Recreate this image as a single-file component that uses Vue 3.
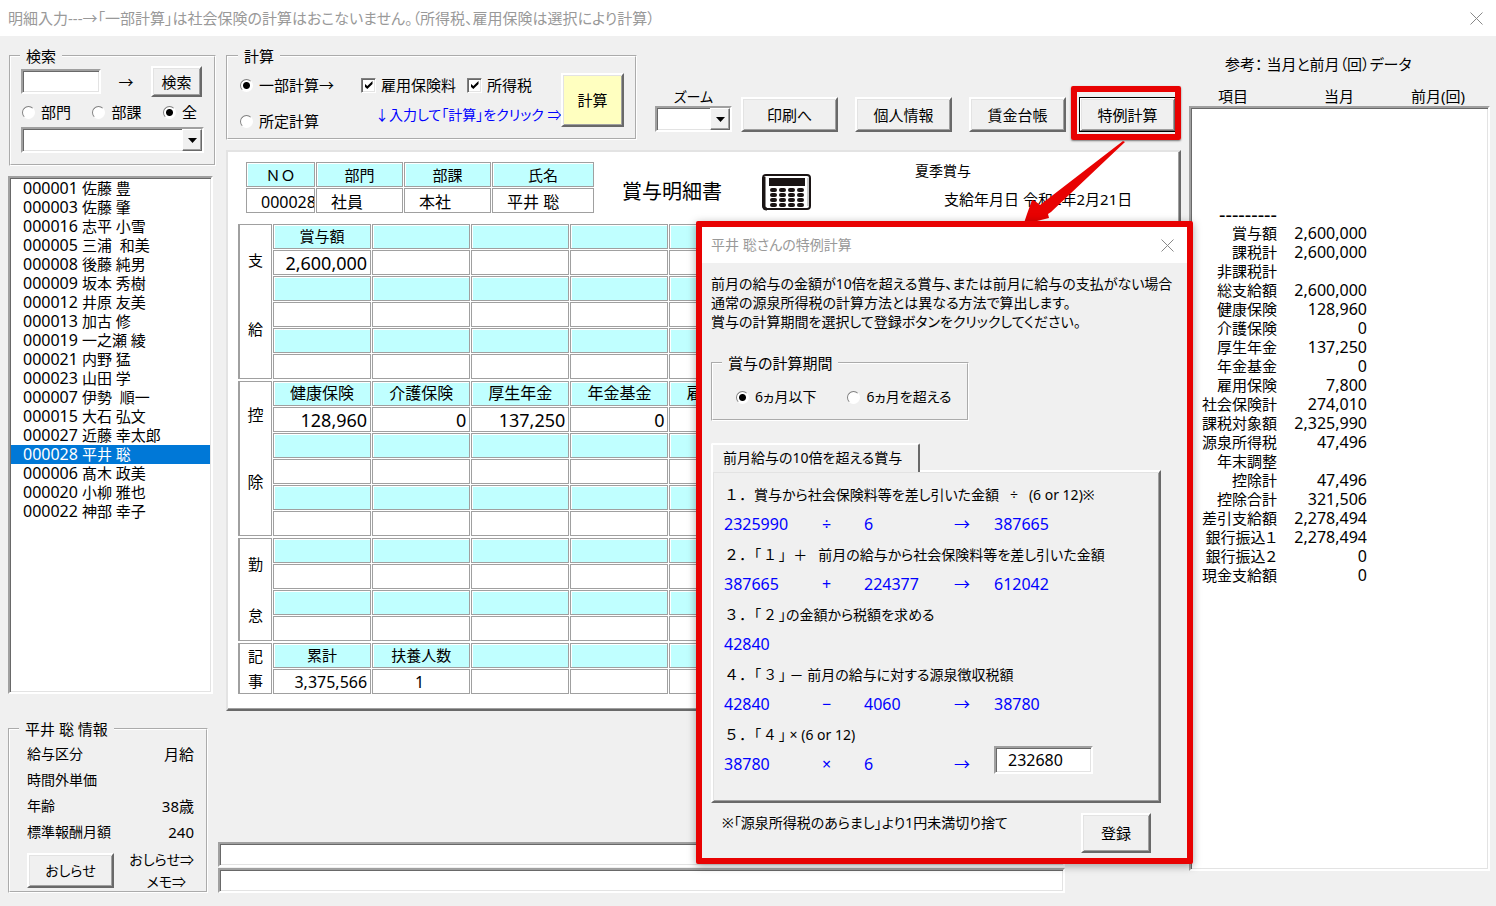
<script setup>
import { ref } from 'vue'

const employees = [
  ['000001', '佐藤 豊'],
  ['000003', '佐藤 肇'],
  ['000016', '志平 小雪'],
  ['000005', '三浦  和美'],
  ['000008', '後藤 純男'],
  ['000009', '坂本 秀樹'],
  ['000012', '井原 友美'],
  ['000013', '加古 修'],
  ['000019', '一之瀬 綾'],
  ['000021', '内野 猛'],
  ['000023', '山田 学'],
  ['000007', '伊勢  順一'],
  ['000015', '大石 弘文'],
  ['000027', '近藤 幸太郎'],
  ['000028', '平井 聡'],
  ['000006', '髙木 政美'],
  ['000020', '小柳 雅也'],
  ['000022', '神部 幸子'],
]
const selected = ref('000028')

const scope = ref('all')
const calcMode = ref('partial')
const employmentIns = ref(true)
const incomeTax = ref(true)
const period = ref('le6')
const taxResult = ref('232680')

const COLS = 9
const pad = (list) => Array.from({ length: COLS }, (_, i) => list[i] ?? '')
const row = (kind, list = []) => ({ kind, cells: pad(list) })

const sections = [
  {
    id: 'pay',
    label: ['支', '給'],
    rows: [
      row('head', ['賞与額']), row('value', ['2,600,000']),
      row('head'), row('value'),
      row('head'), row('value'),
    ],
  },
  {
    id: 'deduct',
    label: ['控', '除'],
    rows: [
      row('head', ['健康保険', '介護保険', '厚生年金', '年金基金', '雇用保険']),
      row('value', ['128,960', '0', '137,250', '0', '7,800']),
      row('head'), row('value'),
      row('head'), row('value'),
    ],
  },
  {
    id: 'attend',
    label: ['勤', '怠'],
    rows: [row('head'), row('value'), row('head'), row('value')],
  },
  {
    id: 'notes',
    label: ['記', '事'],
    rows: [row('head', ['累計', '扶養人数']), row('value', ['3,375,566', '1'])],
  },
]

const reference = [
  ['', ''], ['', ''], ['', ''], ['', ''], ['', ''],
  ['---------', ''],
  ['賞与額', '2,600,000'],
  ['課税計', '2,600,000'],
  ['非課税計', ''],
  ['総支給額', '2,600,000'],
  ['健康保険', '128,960'],
  ['介護保険', '0'],
  ['厚生年金', '137,250'],
  ['年金基金', '0'],
  ['雇用保険', '7,800'],
  ['社会保険計', '274,010'],
  ['課税対象額', '2,325,990'],
  ['源泉所得税', '47,496'],
  ['年末調整', ''],
  ['控除計', '47,496'],
  ['控除合計', '321,506'],
  ['差引支給額', '2,278,494'],
  ['銀行振込１', '2,278,494'],
  ['銀行振込２', '0'],
  ['現金支給額', '0'],
]

const steps = [
  { no: '１．', title: '賞与から社会保険料等を差し引いた金額   ÷   (6 or 12)※', calc: ['2325990', '÷', '6', '→', '387665'] },
  { no: '２．', title: '「 １ 」  ＋   前月の給与から社会保険料等を差し引いた金額', calc: ['387665', '+', '224377', '→', '612042'] },
  { no: '３．', title: '「 ２ 」の金額から税額を求める', calc: ['42840', '', '', '', ''] },
  { no: '４．', title: '「 ３ 」 － 前月の給与に対する源泉徴収税額', calc: ['42840', '−', '4060', '→', '38780'] },
  { no: '５．', title: '「 ４ 」 × (6 or 12)', calc: ['38780', '×', '6', '→', null] },
]
</script>

<template>
  <div class="window">
    <header class="titlebar">
      <h1>明細入力---→「一部計算」は社会保険の計算はおこないません。（所得税、雇用保険は選択により計算）</h1>
      <button class="close" type="button" aria-label="閉じる">
        <svg width="13" height="13" viewBox="0 0 13 13"><path d="M.5.5l12 12M12.5.5l-12 12" stroke="#888" fill="none" /></svg>
      </button>
    </header>

    <main class="body">
      <aside class="left">
        <fieldset class="group search">
          <legend>検索</legend>
          <div class="search-row">
            <input class="sunken search-text" type="text" aria-label="検索文字">
            <span class="to">→</span>
            <button class="raised search-btn" type="button">検索</button>
          </div>
          <div class="scope-row">
            <label><input v-model="scope" type="radio" name="scope" value="dept">部門</label>
            <label><input v-model="scope" type="radio" name="scope" value="section">部課</label>
            <label><input v-model="scope" type="radio" name="scope" value="all">全</label>
          </div>
          <div class="combo">
            <select class="sunken" aria-label="部門・部課"><option></option></select>
            <span class="drop"><svg width="9" height="5" viewBox="0 0 9 5"><path d="M0 0h9L4.500 5z" /></svg></span>
          </div>
        </fieldset>

        <ul class="sunken people" role="listbox" aria-label="社員一覧">
          <li
            v-for="[code, name] in employees" :key="code" role="option"
            :aria-selected="code === selected" :class="{ on: code === selected }" @click="selected = code"
          ><span class="num">{{ code }}</span><span>{{ name }}</span></li>
        </ul>

        <fieldset class="group info">
          <legend>平井 聡 情報</legend>
          <dl>
            <div><dt>給与区分</dt><dd>月給</dd></div>
            <div><dt>時間外単価</dt><dd></dd></div>
            <div><dt>年齢</dt><dd>38歳</dd></div>
            <div><dt>標準報酬月額</dt><dd>240</dd></div>
          </dl>
          <div class="notice">
            <button class="raised" type="button">おしらせ</button>
            <div class="notice-labels">
              <label for="notice">おしらせ⇒</label>
              <label for="memo" class="memo">メモ⇒</label>
            </div>
          </div>
        </fieldset>
      </aside>

      <section class="center">
        <div class="toolbar">
          <fieldset class="group calc">
            <legend>計算</legend>
            <div class="calc-body">
              <div class="modes">
                <label><input v-model="calcMode" type="radio" name="mode" value="partial">一部計算→</label>
                <label><input v-model="calcMode" type="radio" name="mode" value="full">所定計算</label>
              </div>
              <div class="options">
                <div class="checks">
                  <label><input v-model="employmentIns" type="checkbox">雇用保険料</label>
                  <label><input v-model="incomeTax" type="checkbox">所得税</label>
                </div>
                <p>↓入力して「計算」をクリック ⇒</p>
              </div>
              <button class="raised run" type="button">計算</button>
            </div>
          </fieldset>
          <div class="zoom">
            <label for="zoom">ズーム</label>
            <div class="combo">
              <select id="zoom" class="sunken"><option></option></select>
              <span class="drop"><svg width="9" height="5" viewBox="0 0 9 5"><path d="M0 0h9L4.500 5z" /></svg></span>
            </div>
          </div>
          <nav class="actions">
            <button class="raised" type="button">印刷へ</button>
            <button class="raised" type="button">個人情報</button>
            <button class="raised" type="button">賃金台帳</button>
            <span class="marked"><button class="raised default" type="button">特例計算</button></span>
          </nav>
        </div>

        <article class="sheet">
          <div class="sheet-head">
            <table class="ident">
              <thead><tr><th class="c-no">ＮＯ</th><th class="c-dept">部門</th><th class="c-dept">部課</th><th class="c-name">氏名</th></tr></thead>
              <tbody><tr><td><div>000028</div></td><td><div>社員</div></td><td><div>本社</div></td><td><div>平井 聡</div></td></tr></tbody>
            </table>
            <h2>賞与明細書</h2>
            <svg class="calculator" width="50" height="38" viewBox="0 0 50 38">
              <rect x="1" y="2" width="47" height="34" rx="3" fill="#fff" stroke="#1a1414" stroke-width="2" />
              <path d="M2 4v29q0 3 3 3" fill="none" stroke="#1a1414" stroke-width="3" />
              <path d="M46 5v28" stroke="#999" />
              <rect x="7" y="5" width="36" height="8" fill="#1a1414" />
              <g fill="#1a1414">
                <template v-for="r in 4" :key="r">
                  <rect v-for="c in 4" :key="c" :x="c * 9 - 1" :y="10 + r * 5" width="7" height="4" rx="2" />
                </template>
              </g>
            </svg>
            <div class="sheet-meta">
              <p>夏季賞与</p>
              <p class="paid">支給年月日 令和2年2月21日</p>
            </div>
          </div>

          <div class="slip">
            <table v-for="s in sections" :key="s.id" :class="s.id">
              <tbody>
                <tr v-for="(r, i) in s.rows" :key="i" :class="r.kind">
                  <th v-if="i === 0" class="side" :rowspan="s.rows.length">
                    <div><span v-for="ch in s.label" :key="ch">{{ ch }}</span></div>
                  </th>
                  <td v-for="(c, j) in r.cells" :key="j"><div>{{ c }}</div></td>
                </tr>
              </tbody>
            </table>
          </div>
        </article>

        <div class="messages">
          <input id="notice" class="sunken" type="text">
          <input id="memo" class="sunken" type="text">
        </div>

        <svg class="arrow" width="106" height="88" viewBox="0 0 106 88">
          <path d="M102 1l2 1L30 72l-3 2 1 4-12 3L2 86l4-12 5-14 3 1 5 4z" fill="#e80202" />
        </svg>

        <section class="dialog" role="dialog" aria-labelledby="dlg-title">
          <header class="titlebar">
            <h2 id="dlg-title">平井 聡さんの特例計算</h2>
            <button class="close" type="button" aria-label="閉じる">
              <svg width="13" height="13" viewBox="0 0 13 13"><path d="M.5.5l12 12M12.5.5l-12 12" stroke="#888" fill="none" /></svg>
            </button>
          </header>
          <div class="dialog-body">
            <p class="lead">前月の給与の金額が10倍を超える賞与、または前月に給与の支払がない場合<br>通常の源泉所得税の計算方法とは異なる方法で算出します。<br>賞与の計算期間を選択して登録ボタンをクリックしてください。</p>
            <fieldset class="group period">
              <legend>賞与の計算期間</legend>
              <label><input v-model="period" type="radio" name="period" value="le6">6ヵ月以下</label>
              <label><input v-model="period" type="radio" name="period" value="gt6">6ヵ月を超える</label>
            </fieldset>
            <div class="tab">前月給与の10倍を超える賞与</div>
            <div class="panel">
              <template v-for="s in steps" :key="s.no">
                <h3><span class="full">{{ s.no }}</span>{{ s.title }}</h3>
                <div class="formula">
                  <template v-for="(v, i) in s.calc" :key="i">
                    <input v-if="v === null" v-model="taxResult" class="sunken" type="text" aria-label="税額">
                    <span v-else>{{ v }}</span>
                  </template>
                </div>
              </template>
            </div>
            <footer>
              <p>※「源泉所得税のあらまし」より1円未満切り捨て</p>
              <button class="raised" type="button">登録</button>
            </footer>
          </div>
        </section>
      </section>

      <aside class="right">
        <h2>参考： 当月と前月（回）データ</h2>
        <div class="heads"><span>項目</span><span>当月</span><span>前月(回)</span></div>
        <div class="sunken refbox">
          <table>
            <tbody>
              <tr v-for="(r, i) in reference" :key="i">
                <td class="item" :class="{ dash: r[0].startsWith('-') }">{{ r[0] }}</td>
                <td class="amount">{{ r[1] }}</td>
                <td></td>
              </tr>
            </tbody>
          </table>
        </div>
      </aside>
    </main>
  </div>
</template>

<style>
html, body { background: #f0f0f0; }
</style>

<style scoped>
.window, .window * { box-sizing: border-box; }
.window {
  min-height: 100vh;
  display: flex;
  flex-direction: column;
  background: #f0f0f0;
  color: #000;
  font: 15px/20px "Noto Sans", "Noto Sans CJK JP", sans-serif;
  font-feature-settings: "palt";
  white-space: nowrap;
}
h1, h2, h3, p, dl, dd, ul { margin: 0; padding: 0; font-size: 15px; font-weight: 400; }
button, input, select { font: inherit; font-feature-settings: inherit; color: inherit; border-radius: 0; margin: 0; padding: 0; }

.titlebar {
  height: 36px;
  display: flex;
  align-items: center;
  justify-content: space-between;
  padding: 0 13px 0 8px;
  background: #fff;
  color: #999;
}
.close { display: flex; border: 0; background: none; }

.raised {
  background: #f0f0f0;
  border: 2px solid;
  border-color: #fff #696969 #696969 #fff;
  box-shadow: inset 1px 1px #e3e3e3, inset -1px -1px #a0a0a0;
}
.sunken {
  background: #fff;
  border: 2px solid;
  border-color: #a0a0a0 #fff #fff #a0a0a0;
  box-shadow: inset 1px 1px #696969, inset -1px -1px #e3e3e3;
  outline: 0;
}
.group { margin: 0; padding: 0; min-width: 0; border: 2px groove #fff; }
.group legend { padding: 0 6px; }
label { display: flex; align-items: center; }

input[type="radio"], input[type="checkbox"] { appearance: none; flex: none; background: #fff; }
input[type="radio"] {
  width: 13px;
  height: 13px;
  margin-right: 6px;
  border: 1px solid;
  border-color: #808080 #fff #fff #808080;
  border-radius: 50%;
}
input[type="radio"]:checked { background: radial-gradient(circle, #000 3px, #fff 4px); }
input[type="checkbox"] {
  display: flex;
  align-items: center;
  justify-content: center;
  width: 15px;
  height: 15px;
  margin-right: 5px;
  border: 1px solid;
  border-color: #808080 #fff #fff #808080;
  box-shadow: inset 1px 1px #696969, inset -1px -1px #e3e3e3;
}
input[type="checkbox"]:checked::before {
  content: "";
  width: 8px;
  height: 8px;
  background: #000;
  clip-path: polygon(0 30%, 35% 62%, 100% 0, 100% 38%, 35% 100%, 0 68%);
}

.combo { position: relative; }
.combo select { appearance: none; display: block; width: 100%; height: 26px; }
.drop {
  position: absolute;
  top: 2px;
  right: 2px;
  bottom: 2px;
  width: 20px;
  display: flex;
  align-items: center;
  justify-content: center;
  background: #f0f0f0;
  border: 1px solid;
  border-color: #fff #696969 #696969 #fff;
  box-shadow: inset -1px -1px #a0a0a0;
  pointer-events: none;
}

.body { flex: 1; display: flex; padding: 10px 6px 13px 8px; }
.left { width: 208px; display: flex; flex-direction: column; }
.search { height: 120px; margin-left: 1px; padding: 0 10px; }
.search legend { margin-left: -1px; }
.search-row { display: flex; align-items: center; justify-content: space-between; padding-right: 2px; }
.search-text { width: 80px; height: 25px; }
.search-btn { width: 51px; height: 31px; }
.scope-row { display: flex; justify-content: space-between; padding: 5px 7px 5px 1px; }
.people { flex: 1; width: 205px; min-height: 348px; margin-top: 10px; padding: 1px; list-style: none; }
.people li { height: 19px; display: flex; align-items: center; gap: 4px; padding-left: 12px; line-height: 19px; white-space: pre; }
.people .on { background: #0078d7; color: #fff; }
.num { font-size: 16px; }

.info { width: 200px; height: 174px; margin-top: 25px; padding: 5px 12px 0 17px; }
.info legend { margin-left: -8px; }
.info dl { display: flex; flex-direction: column; gap: 6px; font-size: 14px; }
.info dl div { display: flex; justify-content: space-between; }
.notice { display: flex; justify-content: space-between; padding-top: 8px; font-size: 14px; }
.notice button { width: 87px; height: 35px; margin-top: 3px; }
.notice-labels { display: flex; flex-direction: column; align-items: flex-end; gap: 2px; }
.notice .memo { padding-right: 8px; }

.center { position: relative; flex: 1; min-width: 0; margin-left: 2px; display: flex; flex-direction: column; }
.toolbar { display: flex; align-items: flex-end; padding: 0 5px 0 8px; }
.calc { width: 411px; height: 94px; }
.calc legend { margin-left: 10px; }
.calc-body { display: flex; padding: 7px 0 0 12px; }
.modes { display: flex; flex-direction: column; gap: 16px; width: 121px; padding-top: 2px; }
.options { width: 200px; padding-top: 2px; }
.checks { display: flex; gap: 11px; }
.options p { padding: 10px 0 0 14px; color: #00f; font-size: 14px; }
.run { width: 63px; height: 54px; background: #ffffc0; }
.zoom { width: 77px; margin: 0 0 8px 18px; }
.zoom label { justify-content: center; height: 18px; font-size: 14px; }
.actions { display: flex; gap: 17px; margin: 0 0 8px auto; }
.actions button { width: 97px; height: 35px; }
.marked { position: relative; margin-left: -4px; }
.marked::after {
  content: "";
  position: absolute;
  inset: -11px -5px -8px -8px;
  border: 6px solid #e80202;
  border-radius: 2px;
  box-shadow: 0 1px 2px rgba(0, 0, 0, .5);
  pointer-events: none;
}
.marked .default { outline: 1px solid #000; outline-offset: -1px; }

.sheet {
  margin: 10px 0 0 8px;
  padding: 9px 14px 14px 9px;
  background: #fff;
  border: 2px solid;
  border-color: #e3e3e3 #696969 #696969 #e3e3e3;
  box-shadow: inset -1px -1px #a0a0a0;
}
.sheet-head { display: flex; align-items: flex-start; padding-left: 8px; }
table { border-spacing: 1px; table-layout: fixed; }
th, td { padding: 0; font-weight: 400; }
.ident th, .ident td, .slip th, .slip td { height: 25px; border: 1px solid #a0a0a0; }
.ident th, .slip .head td { background: #c0ffff; box-shadow: inset 1px 1px #fff; }
.ident { width: 350px; }
.ident th { text-align: center; }
.c-no { width: 69px; font-feature-settings: normal; }
.c-dept { width: 87px; }
.ident td { font-size: 16px; }
.ident td div { padding: 3px 0 0 14px; height: 23px; line-height: 20px; overflow: hidden; }
.sheet-head h2 { margin-left: 27px; font-size: 20px; line-height: 62px; }
.calculator { margin: 12px 0 0 40px; }
.sheet-meta { margin-left: 103px; }
.sheet-meta p { font-size: 14px; }
.sheet-meta .paid { padding: 8px 0 0 29px; font-size: 15px; }

.slip table { width: 100%; }
.slip td div { height: 23px; line-height: 23px; text-align: center; font-size: 15px; }
.slip .deduct .head div { font-size: 16px; }
.slip .value td div { padding: 2px 3px 0 0; line-height: 21px; text-align: right; font-size: 18px; }
.slip .notes .value td div { font-size: 16px; }
.slip .notes .value td:nth-child(2) div { text-align: center; }
.slip .side { width: 34px; border-left-width: 2px; }
.side div { height: 100%; display: flex; flex-direction: column; align-items: center; justify-content: space-around; }
.pay .side { padding-bottom: 14px; }
.deduct .side { padding-bottom: 20px; }

.messages { display: flex; flex-direction: column; gap: 1px; margin: auto 116px 0 0; }
.messages input { width: 100%; height: 25px; }

.arrow { position: absolute; top: 94px; right: 54px; pointer-events: none; }

.dialog {
  position: absolute;
  top: 175px;
  right: -12px;
  width: 497px;
  background: #f0f0f0;
  border: 6px solid #e80202;
  border-radius: 2px;
  box-shadow: 0 2px 8px rgba(0, 0, 0, .35);
}
.dialog .titlebar { padding-left: 9px; }
.dialog h2, .dialog h3, .dialog p { font-size: 14px; }
.dialog-body { padding: 11px 9px 5px; }
.lead { line-height: 19px; }
.period { display: flex; gap: 31px; width: 258px; height: 68px; margin-top: 22px; padding: 14px 0 0 23px; }
.period legend { margin-left: -14px; }
.period label { height: 20px; font-size: 14px; }
.tab {
  position: relative;
  width: 209px;
  height: 29px;
  margin: 22px 0 -2px;
  padding-left: 10px;
  line-height: 26px;
  background: #f0f0f0;
  border: 2px solid;
  border-color: #fff #696969 transparent #fff;
  border-bottom: 0;
  border-radius: 2px 2px 0 0;
  font-size: 14px;
}
.panel {
  width: 450px;
  height: 333px;
  padding: 12px 0 0 11px;
  border: 2px solid;
  border-color: #fff #696969 #696969 #fff;
  box-shadow: inset 1px 1px #e3e3e3, inset -1px -1px #a0a0a0;
}
.panel h3 { height: 30px; line-height: 20px; white-space: pre; }
.panel .full { font-size: 15px; font-feature-settings: normal; }
.formula {
  display: grid;
  grid-template: 20px / 98px 42px 90px 40px auto;
  margin-bottom: 10px;
  color: #00f;
  font-size: 16px;
}
.formula input { align-self: end; width: 99px; height: 28px; padding-left: 12px; color: #000; }
.dialog footer { display: flex; justify-content: space-between; padding: 10px 27px 0 11px; }
.dialog footer button { width: 70px; height: 40px; }

.right { width: 301px; margin-left: 8px; display: flex; flex-direction: column; }
.right h2 { padding: 8px 0 0 36px; }
.heads { display: grid; grid-template-columns: 106px 87px auto; padding: 12px 0 0 29px; height: 32px; }
.refbox { flex: 1; margin-bottom: 22px; padding: 2px 1px; }
.refbox table { width: 100%; border-spacing: 0; }
.refbox td { height: 19px; line-height: 19px; text-align: right; }
.refbox .item { width: 85px; }
.refbox .amount { width: 90px; font-size: 16px; }
.refbox .dash { font-size: 20px; }
</style>
